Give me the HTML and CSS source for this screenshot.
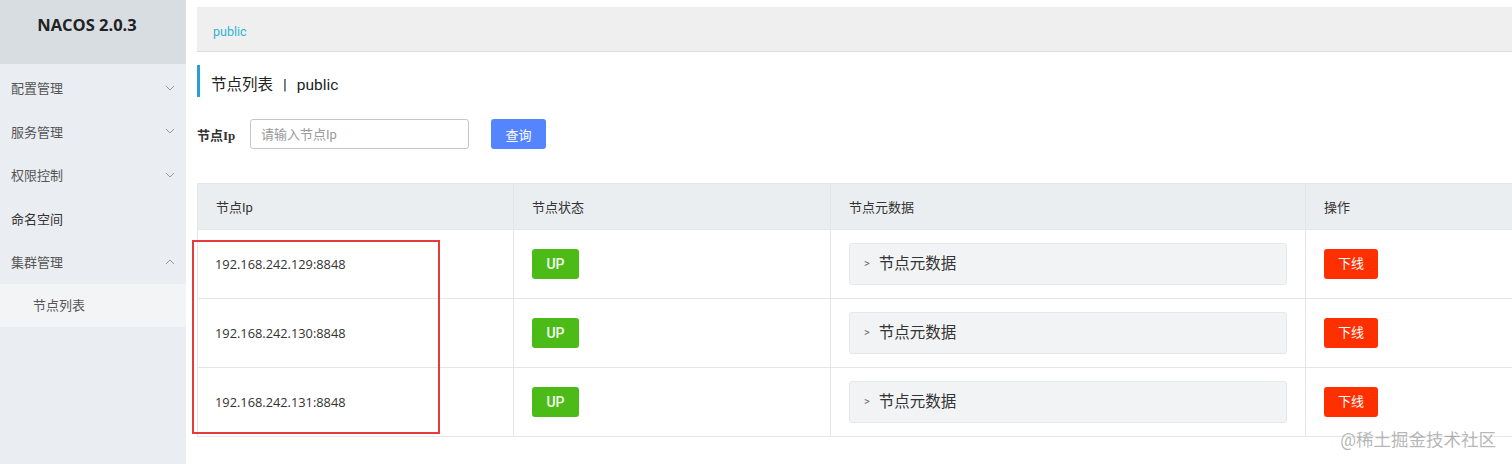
FILE: index.html
```html
<!DOCTYPE html>
<html>
<head>
  <meta charset="UTF-8">
  <title>Nacos - 节点列表</title>
  <link rel="stylesheet" href="styles.css">
</head>
<body>
  <div class="app">
    <div class="sidebar">
      <div class="logo">NACOS 2.0.3</div>
      <ul class="menu">
        <li class="menu-item">配置管理
          <svg class="arrow" viewBox="0 0 10 6"><path d="M1 1l4 4 4-4"/></svg>
        </li>
        <li class="menu-item">服务管理
          <svg class="arrow" viewBox="0 0 10 6"><path d="M1 1l4 4 4-4"/></svg>
        </li>
        <li class="menu-item">权限控制
          <svg class="arrow" viewBox="0 0 10 6"><path d="M1 1l4 4 4-4"/></svg>
        </li>
        <li class="menu-item dark">命名空间</li>
        <li class="menu-item">集群管理
          <svg class="arrow" viewBox="0 0 10 6"><path d="M1 5l4-4 4 4"/></svg>
        </li>
        <li class="sub-item">节点列表</li>
      </ul>
    </div>

    <div class="main">
      <div class="breadcrumb">public</div>

      <div class="page-title">节点列表<span class="sep">|</span>public</div>

      <div class="search">
        <label>节点Ip</label>
        <input type="text" placeholder="请输入节点Ip">
        <button>查询</button>
      </div>

      <table class="nodes">
        <thead>
          <tr>
            <th class="col-ip">节点Ip</th>
            <th class="col-state">节点状态</th>
            <th class="col-meta">节点元数据</th>
            <th>操作</th>
          </tr>
        </thead>
        <tbody>
          <tr>
            <td class="ip">192.168.242.129:8848</td>
            <td><span class="tag">UP</span></td>
            <td><div class="collapse"><span class="chev">&gt;</span>节点元数据</div></td>
            <td><span class="btn-off">下线</span></td>
          </tr>
          <tr>
            <td class="ip">192.168.242.130:8848</td>
            <td><span class="tag">UP</span></td>
            <td><div class="collapse"><span class="chev">&gt;</span>节点元数据</div></td>
            <td><span class="btn-off">下线</span></td>
          </tr>
          <tr>
            <td class="ip">192.168.242.131:8848</td>
            <td><span class="tag">UP</span></td>
            <td><div class="collapse"><span class="chev">&gt;</span>节点元数据</div></td>
            <td><span class="btn-off">下线</span></td>
          </tr>
        </tbody>
      </table>
    </div>
  </div>

  <div class="mark-box"></div>
  <div class="watermark">@稀土掘金技术社区</div>
</body>
</html>
```

FILE: styles.css
```css
html {
  overflow: hidden;
}

body {
  margin: 0;
  width: 1512px;
  height: 464px;
  overflow: hidden;
  background: #fff;
  font-family: Roboto, "Noto Sans CJK SC", sans-serif;
  color: #333;
  position: relative;
}

.app {
  display: flex;
  height: 464px;
}

.sidebar {
  width: 186px;
  flex-shrink: 0;
  background: #eaedf1;
}

.logo {
  height: 64px;
  background: #d8dde2;
  text-align: center;
  padding-right: 12px;
  font-family: "Open Sans", "Noto Sans CJK SC", sans-serif;
  font-weight: bold;
  font-size: 16.5px;
  line-height: 50px;
  color: #222;
}

.menu {
  list-style: none;
  margin: 0;
  padding: 2px 0 0;
}

.menu-item {
  height: 43.5px;
  padding: 0 11px;
  font-size: 13px;
  color: #555;
  display: flex;
  align-items: center;
  justify-content: space-between;
}

.menu-item.dark {
  color: #333;
}

.arrow {
  width: 10px;
  height: 6px;
  fill: none;
  stroke: #999;
  stroke-width: 1;
}

.sub-item {
  height: 43.5px;
  line-height: 43.5px;
  padding-left: 33px;
  font-size: 13px;
  color: #555;
  background: #f2f4f6;
}

.main {
  flex: 1;
  padding: 7px 0 0 11px;
  min-width: 0;
  overflow: hidden;
}

.breadcrumb {
  height: 44px;
  line-height: 49px;
  background: #efefef;
  border-bottom: 1px solid #dcdcdc;
  padding-left: 16px;
  font-size: 12.5px;
  color: #2fb3d3;
}

.page-title {
  margin-top: 13px;
  height: 24px;
  padding-top: 8px;
  line-height: 24px;
  border-left: 3px solid #2a9fd0;
  padding-left: 11px;
  font-size: 15.5px;
  color: #222;
}

.sep {
  margin: 0 10px;
}

.search {
  display: flex;
  align-items: center;
  margin-top: 22px;
  height: 30px;
}

.search label {
  width: 53px;
  font-family: "Liberation Serif", "Noto Sans CJK SC", serif;
  font-weight: bold;
  font-size: 13px;
  color: #333;
}

.search input {
  width: 219px;
  height: 30px;
  box-sizing: border-box;
  border: 1px solid #c4c6cf;
  border-radius: 3px;
  padding: 0 10px;
  font-family: inherit;
  font-size: 13px;
  outline: none;
}

.search input::placeholder {
  color: #999;
}

.search button {
  margin-left: 22px;
  width: 55px;
  height: 30px;
  border: none;
  border-radius: 3px;
  background: #5584ff;
  color: #fff;
  font-family: inherit;
  font-size: 13px;
}

.nodes {
  margin-top: 34px;
  width: 1330px;
  border-collapse: collapse;
  table-layout: fixed;
  font-size: 13px;
}

.nodes th,
.nodes td {
  border: 1px solid #e6e6e6;
  text-align: left;
  padding: 0 18px;
}

.nodes th {
  height: 45px;
  background: #ebeef1;
  font-weight: normal;
  color: #333;
}

.nodes td {
  height: 68px;
  color: #333;
}

.nodes td.ip {
  font-family: "Open Sans", sans-serif;
  font-size: 12.8px;
  padding-left: 17px;
}

.col-ip { width: 279px; }
.col-state { width: 280px; }
.col-meta { width: 438px; }

.tag {
  display: inline-block;
  width: 47px;
  height: 30px;
  line-height: 30px;
  text-align: center;
  background: #4cbb18;
  border-radius: 3px;
  color: #f4fff0;
  font-size: 14px;
  font-weight: 500;
}

.collapse {
  height: 40px;
  line-height: 40px;
  background: #f2f3f5;
  border: 1px solid #e6e8eb;
  border-radius: 3px;
  font-size: 15.5px;
  color: #333;
  padding-left: 14px;
}

.chev {
  font-size: 11px;
  color: #666;
  margin-right: 9px;
  position: relative;
  top: -2px;
}

.btn-off {
  display: inline-block;
  width: 54px;
  height: 30px;
  line-height: 30px;
  text-align: center;
  background: #ff3000;
  border-radius: 3px;
  color: #fff;
  font-size: 13px;
}

.mark-box {
  position: absolute;
  left: 192px;
  top: 240px;
  width: 244px;
  height: 190px;
  border: 2px solid #e63b3b;
}

.watermark {
  position: absolute;
  right: 16px;
  top: 428px;
  white-space: nowrap;
  font-size: 17.5px;
  line-height: 24px;
  color: rgba(120, 120, 120, 0.55);
}
```
